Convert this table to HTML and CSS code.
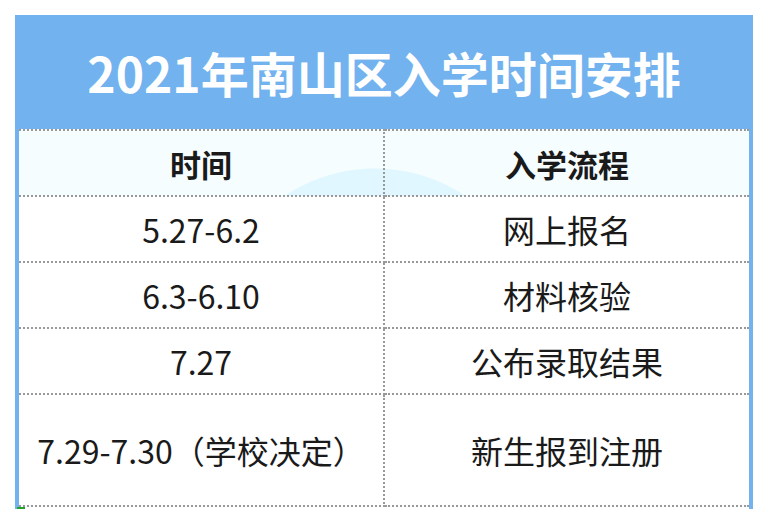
FILE: index.html
```html
<!DOCTYPE html>
<html lang="zh-CN">
<head>
<meta charset="utf-8">
<link rel="stylesheet" href="styles.css">
</head>
<body>
<div class="panel">
  <h1 class="title">2021年南山区入学时间安排</h1>
  <table class="schedule">
    <thead>
      <tr><th>时间</th><th>入学流程</th></tr>
    </thead>
    <tbody>
      <tr><td>5.27-6.2</td><td>网上报名</td></tr>
      <tr><td>6.3-6.10</td><td>材料核验</td></tr>
      <tr><td>7.27</td><td>公布录取结果</td></tr>
      <tr class="tall"><td>7.29-7.30（学校决定）</td><td>新生报到注册</td></tr>
    </tbody>
  </table>
  <div class="tail"><span class="mark"></span></div>
</div>
</body>
</html>
```
FILE: styles.css
```css
html, body {
  margin: 0;
  padding: 0;
  background: #ffffff;
  overflow: hidden;
  height: 509px;
}
body {
  padding: 15px 0 0 15px;
  font-family: "Noto Sans CJK SC", "Noto Sans", sans-serif;
}
.panel {
  width: 730px;
  background: #72b2ee;
  padding: 0 4px 0 4px;
}
.title {
  margin: 0;
  height: 114px;
  display: flex;
  align-items: center;
  justify-content: center;
  color: #ffffff;
  font-size: 48px;
  font-weight: 700;
  letter-spacing: 0;
}
.schedule {
  width: 730px;
  border-collapse: collapse;
  table-layout: fixed;
  background: radial-gradient(circle at 356px 201px, #e0f7ff 162px, rgba(224,247,255,0) 163px), #f5fdff;
}
.schedule th,
.schedule td {
  border: 2px dotted #999999;
  text-align: center;
  vertical-align: middle;
  padding: 0;
  color: #1a1a1a;
  font-size: 32px;
}
.schedule th {
  height: 64px;
  font-weight: 700;
  font-size: 31px;
  background: transparent;
}
.schedule td {
  height: 64px;
  font-weight: 400;
  background: #ffffff;
}
.schedule tr > :first-child { border-left: none; }
.schedule tr > :last-child { border-right: none; }
.schedule tr.tall td { height: 110px; }
.tail {
  height: 12px;
  background: #ffffff;
}
.mark {
  display: block;
  width: 8px;
  height: 3px;
  margin-left: -2px;
  background: #22a22a;
}
```
